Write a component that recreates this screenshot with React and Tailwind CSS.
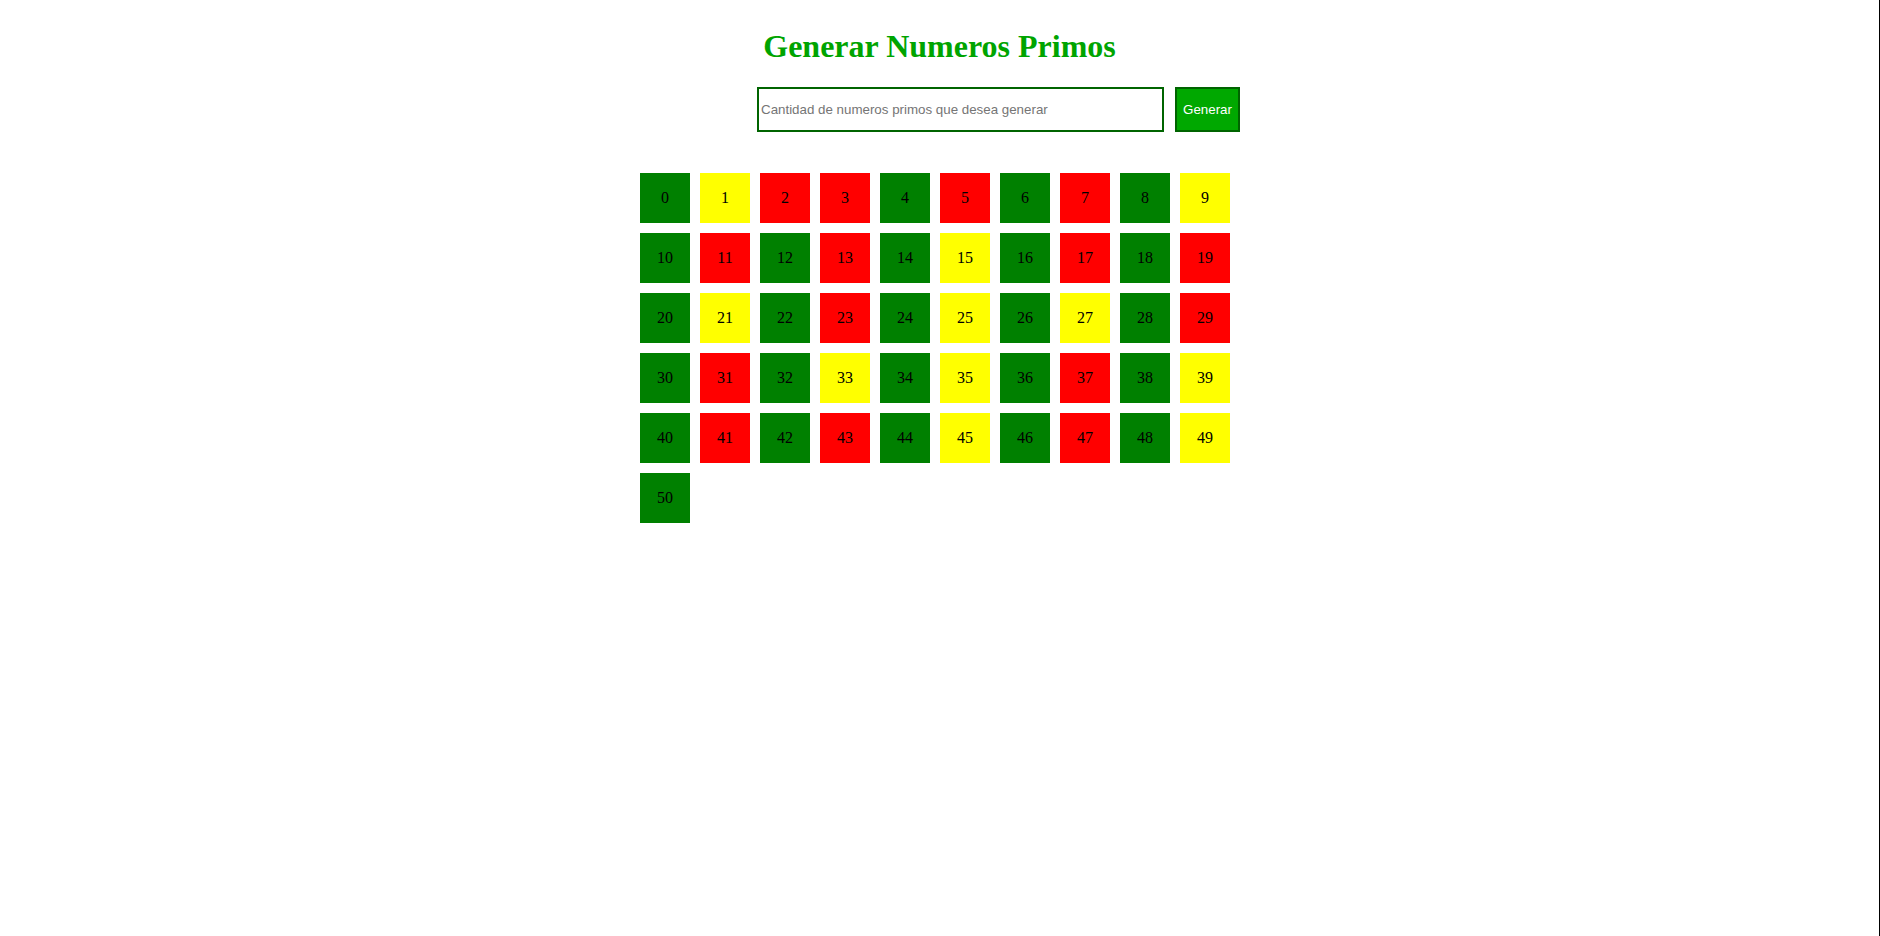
import React from "react";

function isPrime(n) {
  if (n < 2) return false;
  for (let i = 2; i * i <= n; i++) if (n % i === 0) return false;
  return true;
}

function cellClass(n) {
  if (isPrime(n)) return "bg-[#ff0000]";
  if (n % 2 === 0) return "bg-[#008000]";
  return "bg-[#ffff00]";
}

export default function App() {
  const nums = Array.from({ length: 51 }, (_, i) => i);
  return (
    <div className="min-h-screen w-full bg-white border-r border-black" style={{ fontFamily: '"Liberation Serif", serif' }}>
      <div className="pt-[22px] flex justify-center">
        <h1 className="text-[32px] font-bold leading-normal text-[#00a400] m-0" style={{ fontFamily: '"Liberation Serif", serif' }}>
          Generar Numeros Primos
        </h1>
      </div>
      <div className="mt-[17px] flex">
        <div className="ml-[757px] flex gap-[11px]">
          <input
            type="text"
            placeholder="Cantidad de numeros primos que desea generar"
            className="w-[407px] h-[45px] border-2 border-[#006400] px-[2px] text-[13.33px] text-black placeholder:text-[#757575] outline-none bg-white"
            style={{ fontFamily: '"Liberation Sans", Arial, sans-serif' }}
          />
          <button
            className="w-[65px] h-[45px] border-2 border-[#006400] bg-[#00a800] text-white text-[13.33px]"
            style={{ fontFamily: '"Liberation Sans", Arial, sans-serif' }}
          >
            Generar
          </button>
        </div>
      </div>
      <div className="mt-[36px] flex">
        <div className="ml-[635px] w-[600px] flex flex-wrap">
          {nums.map((n) => (
            <div
              key={n}
              className={`m-[5px] w-[50px] h-[50px] flex items-center justify-center text-[16px] text-black ${cellClass(n)}`}
            >
              {n}
            </div>
          ))}
        </div>
      </div>
    </div>
  );
}
